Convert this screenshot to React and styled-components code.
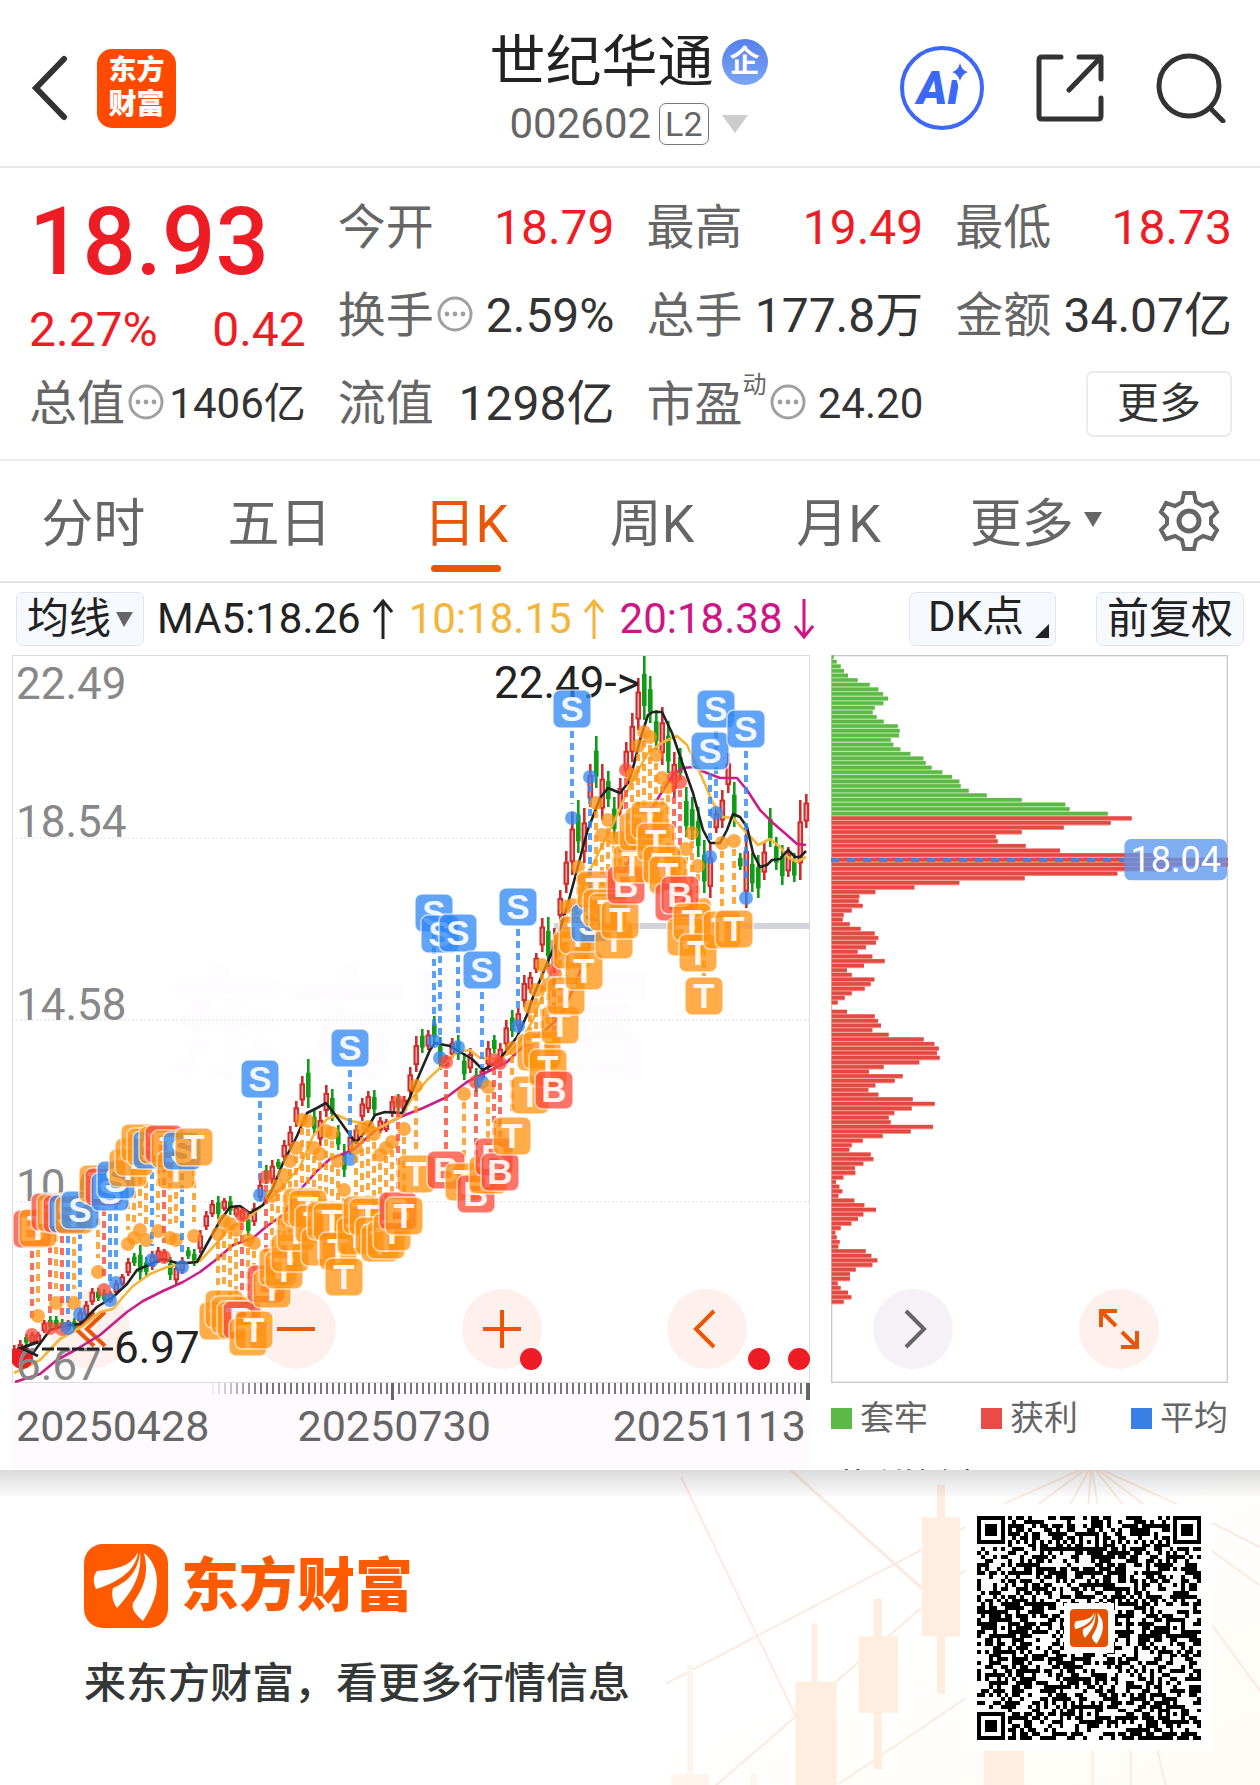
import React from 'react'
import styled, { createGlobalStyle } from 'styled-components';

const RED = '#ee1c25'
const ORANGE = '#ea5506'

// one entry per trading day: direction, top and bottom of the wick
const CANDLES = `r1345-1362 r1340-1358 g1334-1345 r1332-1345 r1332-1344 r1320-1333 g1316-1330 g1316-1330 g1319-1331 r1320-1331
g1318-1330 r1309-1324 r1301-1318 r1288-1305 g1288-1301 g1289-1303 r1291-1303 r1280-1295 r1274-1286 r1258-1276
g1253-1266 g1245-1280 g1257-1276 r1251-1270 r1247-1263 r1249-1263 g1257-1280 r1263-1284 r1257-1274 g1247-1259
g1249-1266 r1230-1253 r1211-1230 r1200-1217 g1196-1219 r1198-1211 g1196-1215 r1205-1217 r1207-1222 g1213-1236
r1203-1226 r1180-1201 g1165-1184 r1160-1184 g1159-1169 r1140-1161 r1126-1150 r1101-1127 r1076-1106 g1059-1108
g1110-1134 r1111-1146 r1085-1117 g1089-1121 g1125-1150 g1144-1177 r1131-1155 r1125-1144 r1098-1121 r1091-1113
g1090-1115 r1117-1133 r1119-1132 r1096-1117 g1094-1110 r1096-1113 r1067-1097 r1036-1072 g1029-1053 r1030-1050
g1016-1043 g1037-1070 r1055-1067 r1038-1058 g1035-1060 g1053-1080 r1048-1073 g1068-1092 r1068-1080 r1041-1070
g1035-1053 r1043-1067 r1020-1050 g1010-1037 r1008-1030 r975-1007 r972-993 r953-973 r918-952 g917-967
r928-973 r890-922 r851-893 r812-875 g800-853 r808-863 r764-807 g736-788 r764-820 g771-807
g797-838 r778-817 r742-777 r713-762 r678-730 g656-720 g676-723 g710-750 r707-765 g721-773
r752-798 g748-780 g787-837 g797-840 g807-857 g840-893 r843-898 r807-833 r790-828 r753-793
g782-827 g853-870 r830-908 g853-892 g855-898 r842-880 g808-847 g837-870 g845-885 r847-877
g853-882 r800-880 r794-828`.split(/\s+/).map((item, index) => {
    const [top, bottom] = item.slice(1).split('-').map(Number)
    return { up: item[0] === 'r', top, bottom, x: 14 + index * 6 }
})

const MA5 = '14,1362 25,1347 33,1353 50,1330 63,1326 80,1324 97,1307 113,1297 127,1284 137,1270 153,1263 163,1259 177,1263 187,1263 197,1262 207,1244 220,1221 230,1207 240,1206 250,1213 263,1205 272,1190 283,1163 297,1136 307,1113 317,1108 326,1103 337,1117 347,1131 356,1143 367,1129 375,1115 385,1112 402,1113 410,1097 420,1073 430,1050 435,1043 450,1046 460,1052 472,1059 483,1070 497,1062 507,1050 517,1037 527,1015 533,997 543,973 555,945 567,907 577,870 587,832 600,798 608,788 620,793 628,783 633,768 640,740 648,715 653,712 662,712 672,733 683,765 693,793 703,830 710,843 720,843 727,830 733,814 740,817 747,827 753,853 760,867 767,865 772,860 780,859 788,850 795,857 800,857 806,851'
const MA10 = '14,1373 40,1360 60,1339 83,1326 100,1312 113,1309 123,1297 133,1286 150,1274 167,1267 187,1263 200,1261 213,1247 230,1228 247,1219 263,1205 283,1186 300,1167 313,1136 327,1119 337,1115 350,1121 363,1123 377,1129 400,1117 413,1097 427,1080 440,1068 457,1052 470,1050 480,1058 497,1059 510,1053 523,1037 533,1020 550,975 570,930 585,880 600,850 615,820 630,785 648,753 663,742 677,736 687,745 700,773 713,803 723,817 733,818 747,833 758,845 770,839 780,847 788,857 797,862 806,857'
const MA20 = '15,1382 40,1374 57,1360 77,1349 100,1335 127,1312 143,1301 163,1291 183,1282 200,1272 217,1259 233,1245 253,1238 267,1226 283,1215 300,1190 317,1171 330,1159 353,1150 377,1129 400,1117 423,1108 447,1097 467,1082 487,1072 507,1062 527,1043 543,1032 560,1017 575,985 595,930 625,870 650,812 660,795 673,775 683,768 693,767 707,773 720,778 737,778 747,790 760,810 773,823 787,835 797,844 806,845'

// signal, x, centre of the badge, centre of the dot on the candle
const SIGNALS = `B,32,1229,1335 T,38,1228,1316 B,50,1212,1328 T,56,1213,1303 B,62,1214,1329 S,68,1214,1328 T,74,1215,1303 S,80,1210,1314
T,98,1184,1272 B,104,1187,1290 S,110,1192,1300 S,116,1180,1283 T,128,1168,1244 T,134,1157,1238 T,140,1143,1230 T,146,1147,1240
S,152,1150,1260 T,158,1145,1231 B,164,1144,1257 T,170,1149,1238 T,176,1170,1240 S,182,1151,1267 T,194,1147,1236
T,218,1321,1234 T,224,1309,1221 T,230,1315,1224 T,236,1320,1230 B,242,1320,1215 T,248,1337,1240 T,254,1330,1243
S,260,1079,1195 B,266,1284,1177 T,272,1289,1196 T,278,1267,1186 T,284,1270,1175 T,290,1253,1161 T,296,1232,1148 T,302,1207,1120
T,308,1209,1121 T,314,1224,1148 T,320,1247,1154 T,326,1221,1131 T,332,1222,1133 T,338,1251,1161 T,344,1277,1190 S,350,1048,1159
T,356,1236,1148 T,362,1215,1129 T,368,1217,1127 T,374,1236,1134 T,380,1243,1155 T,386,1240,1148 T,392,1232,1142 B,398,1211,1102
T,404,1216,1129 T,416,1174,1086 S,434,913,1041 S,440,934,1058 B,446,1170,1062 S,458,933,1047 T,464,1182,1094 B,476,1194,1082
S,482,970,1082 T,488,1175,1087 B,494,1157,1060 B,500,1172,1063 T,512,1136,1048 S,518,907,1026 T,530,1095,1007 T,536,1052,990
T,542,1050,965 T,548,1068,985 B,554,1090,970 T,560,1025,940 T,566,996,907 T,572,950,905 T,578,935,867 T,584,971,880 S,572,709,818
S,590,923,777 T,596,890,803 T,602,908,835 T,614,940,838 T,608,912,820 T,620,920,838 B,626,885,770 T,632,864,775 T,638,832,746 T,644,826,732
T,650,820,737 T,656,842,755 T,662,865,778 T,668,875,787 B,674,902,777 B,680,895,782 T,686,937,849 T,692,922,833 T,698,953,866
T,704,996,905 S,716,709,813 S,710,751,857 S,746,729,898 T,722,930,843 T,734,929,841`.split(/\s+/).map((item) => {
    const [kind, x, badge, dot] = item.split(',')
    return { kind, x: Number(x), badge: Number(badge), dot: Number(dot) }
})

const SIGNAL_COLORS = { T: '#ff9210', S: '#2f88f5', B: '#fb4a38' }

// holdings per price step, from the highest price down
const CHIPS = [6, 15, 27, 37, 49, 78, 114, 140, 154, 169, 155, 129, 123, 135, 156, 198, 204, 202, 177, 185,
    206, 236, 275, 282, 300, 332, 361, 383, 387, 411, 465, 570, 701, 714, 828, 900, 837, 696, 570, 492,
    498, 582, 685, 967, 1189, 1189, 1020, 857, 579, 383, 248, 131, 83, 81, 93, 60, 36, 33, 54, 87,
    129, 140, 133, 103, 78, 122, 159, 97, 46, 60, 128, 117, 99, 60, 39, 18, 0, 46, 129, 139,
    148, 122, 171, 276, 308, 321, 316, 324, 263, 156, 112, 213, 189, 131, 110, 140, 243, 309, 240, 188,
    171, 177, 304, 237, 153, 93, 60, 53, 117, 125, 95, 70, 71, 35, 13, 23, 32, 20, 68, 98,
    133, 95, 79, 59, 27, 11, 15, 24, 20, 102, 119, 137, 122, 72, 55, 55, 18, 27, 49, 59, 36]

const QR_SIZE = 57

function isQrDark(x, y, random) {
    const corners = [[0, 0], [QR_SIZE - 7, 0], [0, QR_SIZE - 7]]
    for (const [cx, cy] of corners) {
        const ring = Math.max(Math.abs(x - cx - 3), Math.abs(y - cy - 3))
        if (ring <= 4) return ring !== 4 && ring !== 2
    }
    for (const ax of [6, 28, 50]) {
        for (const ay of [6, 28, 50]) {
            const ring = Math.max(Math.abs(x - ax), Math.abs(y - ay))
            const onCorner = (ax === 6 && ay !== 28) || (ay === 6 && ax === 50)
            if (ring <= 2 && !onCorner) return ring !== 1
        }
    }
    if (x === 6) return y % 2 === 0
    if (y === 6) return x % 2 === 0
    return random > 0.49
}

function buildQrPath() {
    let seed = 2602
    let path = ''
    for (let y = 0; y < QR_SIZE; y++) {
        for (let x = 0; x < QR_SIZE; x++) {
            seed = (seed * 16807) % 2147483647
            if (isQrDark(x, y, seed / 2147483647)) path += `M${x} ${y}h1v1h-1z`
        }
    }
    return path
}

const QR_PATH = buildQrPath()

function BrandMark({ color, radius }) {
    return (
        <svg width="100%" height="100%" viewBox="0 0 84 84" aria-hidden="true">
            <rect width="84" height="84" rx={radius} fill={color} />
            <path d="M54 8C53 20 43 36 12 45C9 38 9 32 13 27C34 25 47 22 54 8Z" fill="#fff" />
            <path d="M56 8C58 30 50 46 33 64C29 58 27 52 29 44C46 37 54 26 56 8Z" fill="#fff" />
            <path d="M60 9C76 22 79 48 59 77C52 71 47 65 49 59C61 42 65 28 60 9Z" fill="#fff" />
        </svg>
    )
}

function InfoIcon() {
    return (
        <InfoButton aria-label="说明">
            <svg width="36" height="36" viewBox="0 0 36 36" fill="#a0a0a0">
                <circle cx="18" cy="18" r="16" fill="none" stroke="#a0a0a0" strokeWidth="3" />
                <circle cx="10" cy="18" r="2.4" />
                <circle cx="18" cy="18" r="2.4" />
                <circle cx="26" cy="18" r="2.4" />
            </svg>
        </InfoButton>
    )
}

function Quote({ label, value, red, small, info, sup }) {
    return (
        <QuoteCell>
            <QuoteLabel>{label}{sup && <sup>{sup}</sup>}</QuoteLabel>
            {info && <InfoIcon />}
            <QuoteValue $red={red} $small={small}>{value}</QuoteValue>
        </QuoteCell>
    )
}

function Header() {
    return (
        <TopBar>
            <TopLeft>
                <IconButton aria-label="返回">
                    <svg width="38" height="66" viewBox="0 0 38 66" fill="none" stroke="#333" strokeWidth="6" strokeLinecap="round">
                        <path d="M33 4L5 33L33 62" strokeLinejoin="miter" />
                    </svg>
                </IconButton>
                <AppLogo href="/">
                    <span>东方</span>
                    <span>财富</span>
                </AppLogo>
            </TopLeft>

            <TitleBlock>
                <TitleRow>
                    <h1>世纪华通</h1>
                    <CompanyBadge>企</CompanyBadge>
                </TitleRow>
                <CodeButton>
                    002602
                    <LevelTag>L2</LevelTag>
                    <svg width="26" height="18" viewBox="0 0 26 18"><path d="M0 0H26L13 18Z" fill="#ccc" /></svg>
                </CodeButton>
            </TitleBlock>

            <TopRight>
                <IconButton aria-label="Ai">
                    <svg width="84" height="84" viewBox="0 0 84 84">
                        <circle cx="42" cy="42" r="40" fill="none" stroke="#3d68f5" strokeWidth="4" />
                        <AiText x="17" y="58">Ai</AiText>
                        <path d="M60 17Q62 25 68 26Q62 28 60 35Q58 28 52 26Q58 25 60 17Z" fill="#3d68f5" stroke="#fff" strokeWidth="6" paintOrder="stroke" />
                    </svg>
                </IconButton>
                <IconButton aria-label="分享">
                    <svg width="68" height="68" viewBox="0 0 68 68" fill="none" stroke="#333" strokeWidth="5" strokeLinecap="round" strokeLinejoin="round">
                        <path d="M25 3H6Q3 3 3 6V62Q3 65 6 65H62Q65 65 65 62V44" />
                        <path d="M43 3H65V25M65 3L33 36" />
                    </svg>
                </IconButton>
                <IconButton aria-label="搜索">
                    <svg width="70" height="70" viewBox="0 0 70 70" fill="none" stroke="#333" strokeWidth="5" strokeLinecap="round">
                        <circle cx="33" cy="33" r="30" />
                        <path d="M55 56L67 68" />
                    </svg>
                </IconButton>
            </TopRight>
        </TopBar>
    )
}

function KLineChart() {
    return (
        <ChartSvg viewBox="12 655 798 728" role="img" aria-label="日K">
            <Watermark x="410" y="1068">东方财富</Watermark>
            <rect x="12.5" y="655.5" width="797" height="727" fill="none" stroke="#dcdcdc" />
            {[838, 1020, 1202].map((y) => (
                <line key={y} x1="12" x2="810" y1={y} y2={y} stroke="#dedede" strokeWidth="1" strokeDasharray="2 2" />
            ))}
            <rect x="554" y="923" width="255" height="6" fill="#d3d3dc" />

            <PriceLabel x="16" y="699">22.49</PriceLabel>
            <PriceLabel x="16" y="837">18.54</PriceLabel>
            <PriceLabel x="16" y="1020">14.58</PriceLabel>
            <PriceLabel x="16" y="1201">10.63</PriceLabel>

            {CANDLES.map(({ x, up, top, bottom }) => {
                const height = bottom - top
                return (
                    <g key={x}>
                        <rect x={x - 1} y={top} width="2.6" height={height} fill={up ? '#d02b2b' : '#0f9d17'} />
                        {up
                            ? <rect x={x - 1.5} y={top + height * 0.28} width="3.6" height={height * 0.5} fill="#f0a9a9" stroke="#d02b2b" strokeWidth="2" />
                            : <rect x={x - 2} y={top + height * 0.28} width="4.6" height={height * 0.5} fill="#0f9d17" />}
                    </g>
                )
            })}

            <MaLine points={MA20} stroke="#c81e87" />
            <MaLine points={MA10} stroke="#f5b53a" />
            <MaLine points={MA5} stroke="#222" />

            {SIGNALS.map(({ kind, x, badge, dot }) => (
                <g key={kind + x}>
                    <line x1={x} x2={x} y1={dot > badge ? badge + 22 : dot + 8} y2={dot > badge ? dot - 14 : badge - 20}
                        stroke={SIGNAL_COLORS[kind]} strokeWidth="4" strokeDasharray="7 5" strokeOpacity="0.8" />
                    <circle cx={x} cy={dot} r="7" fill={SIGNAL_COLORS[kind]} fillOpacity="0.75" />
                </g>
            ))}

            <circle cx="22" cy="1358" r="11" fill={RED} />
            <PriceLabel x="16" y="1380">6.67</PriceLabel>
            <path d="M42 1349H113" stroke="#222" strokeWidth="3" strokeDasharray="12 3" />
            <path d="M38 1342L21 1348L38 1356" stroke="#222" strokeWidth="3" fill="none" />
            <PeakLabel x="114" y="1363">6.97</PeakLabel>
            <PeakLabel x="494" y="698">22.49-&gt;</PeakLabel>

            {SIGNALS.map(({ kind, x, badge }) => (
                <g key={kind + x}>
                    <rect x={x - 19} y={badge - 19} width="38" height="38" rx="7" fill={SIGNAL_COLORS[kind]} fillOpacity="0.76" stroke="#fff" strokeOpacity="0.65" strokeWidth="1.5" />
                    <SignalText x={x} y={badge + 12}>{kind}</SignalText>
                </g>
            ))}

            {[531, 759, 799].map((x) => <circle key={x} cx={x} cy="1359" r="11" fill={RED} />)}
        </ChartSvg>
    )
}

function ChipChart() {
    return (
        <ChartSvg viewBox="0 0 1191 2184" role="img" aria-label="筹码分布">
            <rect x="2" y="2" width="1187" height="2180" fill="none" stroke="#c9c9c9" strokeWidth="4" />
            {CHIPS.map((width, index) => (
                <rect key={index} x="2" y={index * 13.814} width={width} height="14" fill={index < 35 ? '#a5e08f' : '#ff8a80'} />
            ))}
            {CHIPS.map((width, index) => (
                <rect key={index} x="2" y={index * 13.814 + 1} width={width} height="10" fill={index < 35 ? '#5cb947' : '#df4a45'} />
            ))}
            <line x1="0" x2="880" y1="615" y2="615" stroke="#4a7fd8" strokeWidth="12" strokeDasharray="24 24" />
            <rect x="880" y="552" width="308" height="124" rx="20" fill="#5b97f0" fillOpacity="0.78" />
            <AverageText x="1034" y="651">18.04</AverageText>
        </ChartSvg>
    )
}

function AxisTicks() {
    const ticks = Array.from({ length: 100 }, (_, index) => 200 + index * 6)
    return (
        <ChartSvg viewBox="0 0 798 20" aria-hidden="true">
            {ticks.map((x, index) => (
                <rect key={x} x={x} y="0" width="2" height="11" fill="#777" fillOpacity={Math.min(1, 0.1 + index * 0.11)} />
            ))}
            <rect x="379" width="3" height="17" fill="#666" />
            <rect x="794" width="4" height="17" fill="#666" />
        </ChartSvg>
    )
}

function FooterArt() {
    return (
        <FooterSvg viewBox="660 1470 600 315" preserveAspectRatio="xMaxYMid slice" aria-hidden="true">
            <defs>
                <linearGradient id="warm" x1="0" y1="0" x2="1" y2="1">
                    <stop offset="0.45" stopColor="#fff" />
                    <stop offset="1" stopColor="#fffcf4" />
                </linearGradient>
            </defs>
            <rect x="660" y="1470" width="600" height="315" fill="url(#warm)" />
            <g stroke="#fdeadf" strokeWidth="2" fill="none">
                <path d="M792 1470L923 1588" strokeWidth="3" />
                <path d="M683 1477L797 1715" />
                <path d="M668 1683L966 1527M717 1785L966 1570M840 1783L966 1698" />
                <path d="M1092 1465L1004 1504M1092 1465L1039 1504M1092 1465L1071 1504M1092 1465L1089 1504M1092 1465L1098 1504M1092 1465L1123 1504M1092 1465L1144 1504M1092 1465L1177 1504" />
                <path d="M1211 1522L1260 1547M1211 1550L1260 1585M1211 1623L1260 1690" />
                <path d="M1093 1750V1785M1131 1750V1785M1158 1750L1166 1785" />
            </g>
            <g fill="#ffeddf">
                <path d="M938 1485h8v32h15v119h-15v57h-8v-57h-15v-119h15z" />
                <path d="M875 1598h8v38h16v76h-16v56h-8v-56h-15v-76h15z" />
                <path d="M813 1623h6v58h19v104h-41v-104h16z" />
                <path d="M985 1750h40v35h-40z" />
            </g>
            <g fill="#fff5ee">
                <path d="M689 1664h6v109h16v12h-38v-12h16z" />
                <path d="M752 1772h6v13h-6z" />
            </g>
        </FooterSvg>
    )
}

function App() {
    return (
        <Page>
            <GlobalStyle />
            <Header />

            <QuotePanel>
                <PriceBlock>
                    <Price>18.93</Price>
                    <PriceChange>
                        <span>2.27%</span>
                        <span>0.42</span>
                    </PriceChange>
                </PriceBlock>
                <Quote label="今开" value="18.79" red />
                <Quote label="最高" value="19.49" red />
                <Quote label="最低" value="18.73" red />
                <Quote label="换手" value="2.59%" info />
                <Quote label="总手" value="177.8万" />
                <Quote label="金额" value="34.07亿" />
                <Quote label="总值" value="1406亿" info small />
                <Quote label="流值" value="1298亿" />
                <Quote label="市盈" sup="动" value="24.20" info small />
                <QuoteCell>
                    <MoreButton>更多</MoreButton>
                </QuoteCell>
            </QuotePanel>

            <Tabs>
                <Tab>分时</Tab>
                <Tab>五日</Tab>
                <Tab $active>日K</Tab>
                <Tab>周K</Tab>
                <Tab>月K</Tab>
                <Tab $menu>
                    更多
                    <svg width="18" height="15" viewBox="0 0 18 15"><path d="M0 0H18L9 15Z" fill="#666" /></svg>
                </Tab>
                <IconButton aria-label="设置">
                    <svg width="62" height="62" viewBox="0 0 62 62" fill="none" stroke="#666" strokeWidth="4" strokeLinejoin="miter">
                        <path d="M26 3H36L38 12L45 16L54 13L59 22L53 28V34L59 40L54 49L45 46L38 50L36 59H26L24 50L17 46L8 49L3 40L9 34V28L3 22L8 13L17 16L24 12Z" />
                        <circle cx="31" cy="31" r="10" strokeWidth="5" />
                    </svg>
                </IconButton>
            </Tabs>

            <IndicatorBar>
                <Chip>
                    均线
                    <svg width="17" height="15" viewBox="0 0 17 15"><path d="M0 0H17L8 15Z" fill="#666" /></svg>
                </Chip>
                <Indicators>
                    <Indicator $color="#222">MA5:18.26<TrendArrow /></Indicator>
                    <Indicator $color="#f5b53a">10:18.15<TrendArrow /></Indicator>
                    <Indicator $color="#cf1485">20:18.38<TrendArrow down /></Indicator>
                </Indicators>
                <ChipGroup>
                    <Chip $corner>
                        DK点
                        <svg width="14" height="14" viewBox="0 0 14 14"><path d="M14 0V14H0Z" fill="#222" /></svg>
                    </Chip>
                    <Chip>前复权</Chip>
                </ChipGroup>
            </IndicatorBar>

            <Charts>
                <KLineChart />
                <ChipChart />
                <ChartTools>
                    <RoundButton aria-label="最早"><svg width="36" height="40" viewBox="0 0 36 40"><path d="M22 3L4 20L22 37M33 3L15 20L33 37" /></svg></RoundButton>
                    <RoundButton aria-label="缩小"><svg width="40" height="40" viewBox="0 0 40 40"><path d="M1 20H39" /></svg></RoundButton>
                    <RoundButton aria-label="放大"><svg width="40" height="40" viewBox="0 0 40 40"><path d="M1 20H39M20 1V39" /></svg></RoundButton>
                    <RoundButton aria-label="左移"><svg width="40" height="40" viewBox="0 0 40 40"><path d="M27 2L9 20L27 38" /></svg></RoundButton>
                    <RoundButton aria-label="右移" $grey><svg width="40" height="40" viewBox="0 0 40 40"><path d="M13 2L31 20L13 38" /></svg></RoundButton>
                    <RoundButton aria-label="全屏"><svg width="40" height="40" viewBox="0 0 40 40"><path d="M18 2H2V18M2 2L17 17M22 38H38V22M38 38L23 23" /></svg></RoundButton>
                </ChartTools>
            </Charts>

            <ChartFooter>
                <DateAxis>
                    <AxisTicks />
                    <Dates>
                        <span>20250428</span>
                        <span>20250730</span>
                        <span>20251113</span>
                    </Dates>
                </DateAxis>
                <LegendColumn>
                    <Legend>
                        <LegendItem $color="#5cb947">套牢</LegendItem>
                        <LegendItem $color="#e84c46">获利</LegendItem>
                        <LegendItem $color="#3a7fe5">平均</LegendItem>
                    </Legend>
                    <CutLine>获利比例</CutLine>
                </LegendColumn>
            </ChartFooter>

            <Promo>
                <FooterArt />
                <PromoShade />
                <PromoText>
                    <BrandRow>
                        <BrandBox><BrandMark color="#ff5a00" radius="19" /></BrandBox>
                        <BrandName>东方财富</BrandName>
                    </BrandRow>
                    <Slogan>来东方财富，看更多行情信息</Slogan>
                </PromoText>
                <QrBox>
                    <svg width="100%" viewBox={`0 0 ${QR_SIZE} ${QR_SIZE}`} shapeRendering="crispEdges" role="img" aria-label="二维码">
                        <path d={QR_PATH} fill="#000" />
                    </svg>
                    <QrLogo><BrandMark color="#e65100" radius="9" /></QrLogo>
                </QrBox>
            </Promo>
        </Page>
    )
}

function TrendArrow({ down }) {
    return (
        <svg width="20" height="40" viewBox="0 0 20 40" fill="none" stroke="currentColor" strokeWidth="3">
            <path d={down ? 'M10 0V38M1 27L10 38L19 27' : 'M10 40V2M1 13L10 2L19 13'} />
        </svg>
    )
}

export default App

const GlobalStyle = createGlobalStyle`
    * {
        box-sizing: border-box;
    }

    body {
        margin: 0;
        background-color: white;
        color: #333;
        font-family: Roboto, "Noto Sans CJK SC", sans-serif;
    }

    button {
        padding: 0;
        border: none;
        background: none;
        color: inherit;
        font: inherit;
        cursor: pointer;
    }

    svg {
        flex-shrink: 0;
    }
`

const Page = styled.main`
    width: 100%;
    overflow: hidden;
`

const TopBar = styled.header`
    display: grid;
    grid-template-columns: 1fr auto 1fr;
    align-items: center;
    height: 168px;
    padding: 10px 34px 0 31px;
    border-bottom: 2px solid #e8e8e8;
`

const TopLeft = styled.div`
    display: flex;
    align-items: center;
    gap: 28px;
`

const TopRight = styled.div`
    display: flex;
    align-items: center;
    justify-content: flex-end;
    gap: 52px;
`

const IconButton = styled.button`
    display: flex;
    align-items: center;
    justify-content: center;
`

const AppLogo = styled.a`
    display: flex;
    flex-direction: column;
    align-items: center;
    justify-content: center;
    width: 79px;
    height: 79px;
    border-radius: 15px;
    background-color: #ff4a00;
    color: white;
    font-size: 28px;
    font-weight: 900;
    line-height: 34px;
    text-decoration: none;
`

const TitleBlock = styled.div`
    display: flex;
    flex-direction: column;
    align-items: center;
    padding-top: 4px;
`

const TitleRow = styled.div`
    display: flex;
    align-items: center;
    gap: 8px;

    h1{
        margin: 0;
        font-size: 56px;
        font-weight: 400;
        line-height: 68px;
        color: #222;
    }
`

const CompanyBadge = styled.span`
    width: 46px;
    height: 46px;
    border-radius: 50%;
    background: linear-gradient(#5580ea, #7ba5f3);
    color: white;
    font-size: 30px;
    font-weight: 700;
    line-height: 44px;
    text-align: center;
`

const CodeButton = styled.button`
    display: flex;
    align-items: center;
    font-size: 42px;
    line-height: 56px;
    color: #666;

    svg{
        margin-left: 13px;
    }
`

const LevelTag = styled.span`
    margin-left: 8px;
    padding: 0 5px;
    border: 1px solid #777;
    border-radius: 7px;
    font-size: 34px;
    line-height: 40px;
`

const AiText = styled.text`
    font-family: Roboto, sans-serif;
    font-size: 46px;
    font-weight: 900;
    font-style: italic;
    fill: #3d68f5;
`

const QuotePanel = styled.section`
    display: grid;
    grid-template-columns: repeat(4, 1fr);
    grid-auto-rows: 88px;
    column-gap: 32px;
    padding: 16px 28px 11px 29px;
    border-bottom: 2px solid #ececec;
`

const PriceBlock = styled.div`
    display: flex;
    flex-direction: column;
    grid-row: span 2;
    gap: 20px;
    padding-top: 20px;
    color: ${RED};
`

const Price = styled.strong`
    font-size: 94px;
    font-weight: 500;
    line-height: 76px;
`

const PriceChange = styled.div`
    display: flex;
    justify-content: space-between;
    font-size: 48px;
    line-height: 60px;
`

const QuoteCell = styled.div`
    display: flex;
    align-items: center;
    justify-content: space-between;
    white-space: nowrap;
`

const QuoteLabel = styled.span`
    color: #666;
    font-size: 48px;
    line-height: 60px;

    sup{
        display: inline-block;
        font-size: 24px;
        line-height: 24px;
        vertical-align: 28px;
    }
`

const InfoButton = styled.button`
    display: flex;
    margin-right: auto;
    padding: 0 0 4px 3px;
`

const QuoteValue = styled.span`
    color: ${props => props.$red ? RED : '#333'};
    font-size: ${props => props.$small ? '42px' : '48px'};
    line-height: 60px;
`

const MoreButton = styled.button`
    width: 146px;
    height: 66px;
    margin-left: auto;
    border: 2px solid #ebebee;
    border-radius: 7px;
    font-size: 42px;
    line-height: 56px;
`

const Tabs = styled.nav`
    display: grid;
    grid-template-columns: repeat(6, 1fr) 142px;
    height: 122px;
    border-bottom: 2px solid #e4e4e4;
`

const Tab = styled.button`
    position: relative;
    display: flex;
    align-items: center;
    justify-content: center;
    gap: ${props => props.$menu ? '10px' : '0'};
    padding: 0 0 4px ${props => props.$menu ? '22px' : '0'};
    color: ${props => props.$active ? ORANGE : '#666'};
    font-size: 52px;

    &::after{
        content: "";
        display: ${props => props.$active ? 'block' : 'none'};
        position: absolute;
        bottom: 9px;
        width: 70px;
        height: 7px;
        border-radius: 4px;
        background-color: ${ORANGE};
    }
`

const IndicatorBar = styled.div`
    display: flex;
    align-items: center;
    height: 72px;
    padding: 0 16px;
    white-space: nowrap;
`

const Chip = styled.button`
    display: flex;
    align-items: ${props => props.$corner ? 'flex-end' : 'center'};
    gap: 5px;
    height: 54px;
    padding: ${props => props.$corner ? '0 6px 7px 18px' : '0 10px'};
    border: 1px solid #dfe4ee;
    border-radius: 7px;
    background-color: #f6f9fe;
    color: #222;
    font-size: 42px;
    line-height: 42px;

    & > svg{
        margin-left: ${props => props.$corner ? '6px' : '0'};
    }
`

const Indicators = styled.div`
    display: flex;
    flex: 1;
    gap: 16px;
    padding-left: 13px;
`

const Indicator = styled.span`
    display: flex;
    align-items: center;
    gap: 12px;
    color: ${props => props.$color};
    font-size: 42px;
    line-height: 54px;
`

const ChipGroup = styled.div`
    display: flex;
    gap: 40px;
`

const Charts = styled.section`
    position: relative;
    display: grid;
    grid-template-columns: 798fr 397fr;
    gap: 21px;
    padding: 0 32px 0 12px;

    & > svg{
        position: relative;
        z-index: 1;
        pointer-events: none;
    }
`

const ChartSvg = styled.svg`
    display: block;
    width: 100%;
`

const Watermark = styled.text`
    font-size: 122px;
    font-weight: 700;
    text-anchor: middle;
    fill: #fefcfe;
`

const PriceLabel = styled.text`
    font-size: 44px;
    fill: #888;
`

const PeakLabel = styled.text`
    font-size: 44px;
    fill: #222;
`

const SignalText = styled.text`
    font-family: "Liberation Sans", Arial, sans-serif;
    font-size: 35px;
    font-weight: 700;
    text-anchor: middle;
    fill: white;
    fill-opacity: 0.92;
`

const AverageText = styled.text`
    font-size: 108px;
    text-anchor: middle;
    fill: white;
`

const MaLine = styled.polyline`
    fill: none;
    stroke-width: 2.6;
    stroke-linejoin: round;
`

const ChartTools = styled.div`
    position: absolute;
    right: 101px;
    bottom: 14px;
    left: 50px;
    display: flex;
    justify-content: space-between;
`

const RoundButton = styled.button`
    display: flex;
    align-items: center;
    justify-content: center;
    width: 80px;
    height: 80px;
    border-radius: 50%;
    background-color: ${props => props.$grey ? '#f5f1f6' : '#fef1ed'};

    path{
        fill: none;
        stroke: ${props => props.$grey ? '#666' : ORANGE};
        stroke-width: 4;
    }
`

const ChartFooter = styled.div`
    display: grid;
    grid-template-columns: 798fr 397fr;
    gap: 21px;
    height: 87px;
    padding: 0 32px 0 12px;
`

const DateAxis = styled.div`
    background-color: #fefafe;
`

const Dates = styled.div`
    display: grid;
    grid-template-columns: 285fr auto 319fr;
    padding: 0 4px;
    color: #666;
    font-size: 43px;
    line-height: 46px;

    span:last-child{
        text-align: right;
    }
`

const LegendColumn = styled.div`
    display: flex;
    flex-direction: column;
    justify-content: space-between;
    padding-top: 13px;
`

const Legend = styled.div`
    display: flex;
    justify-content: space-between;
`

const LegendItem = styled.span`
    display: flex;
    align-items: center;
    gap: 8px;
    color: #666;
    font-size: 34px;
    line-height: 44px;

    &::before{
        content: "";
        width: 21px;
        height: 21px;
        background-color: ${props => props.$color};
    }
`

const CutLine = styled.div`
    height: 3px;
    padding-left: 4px;
    overflow: hidden;
    font-size: 34px;
    line-height: 38px;
`

const Promo = styled.footer`
    position: relative;
    display: flex;
    justify-content: space-between;
    min-height: 315px;
    padding: 35px 48px 35px 84px;
`

const FooterSvg = styled.svg`
    position: absolute;
    top: 0;
    right: 0;
    width: 600px;
    height: 100%;
`

const PromoShade = styled.div`
    position: absolute;
    top: 0;
    right: 0;
    left: 0;
    height: 26px;
    background: linear-gradient(rgba(0, 0, 0, 0.14), rgba(0, 0, 0, 0.02));
`

const PromoText = styled.div`
    position: relative;
    padding-top: 39px;
`

const BrandRow = styled.div`
    display: flex;
    align-items: center;
    gap: 13px;
`

const BrandBox = styled.div`
    width: 84px;
    height: 84px;
`

const BrandName = styled.span`
    color: #ff5a00;
    font-size: 58px;
    font-weight: 900;
    line-height: 84px;
`

const Slogan = styled.p`
    margin: 26px 0 0;
    color: #333836;
    font-size: 42px;
    font-weight: 500;
    line-height: 60px;
`

const QrBox = styled.div`
    position: relative;
    width: 246px;
    height: 246px;
    padding: 11px;
    background-color: white;
`

const QrLogo = styled.div`
    position: absolute;
    top: 98px;
    left: 98px;
    width: 50px;
    height: 50px;
    padding: 6px;
    background-color: white;
`
